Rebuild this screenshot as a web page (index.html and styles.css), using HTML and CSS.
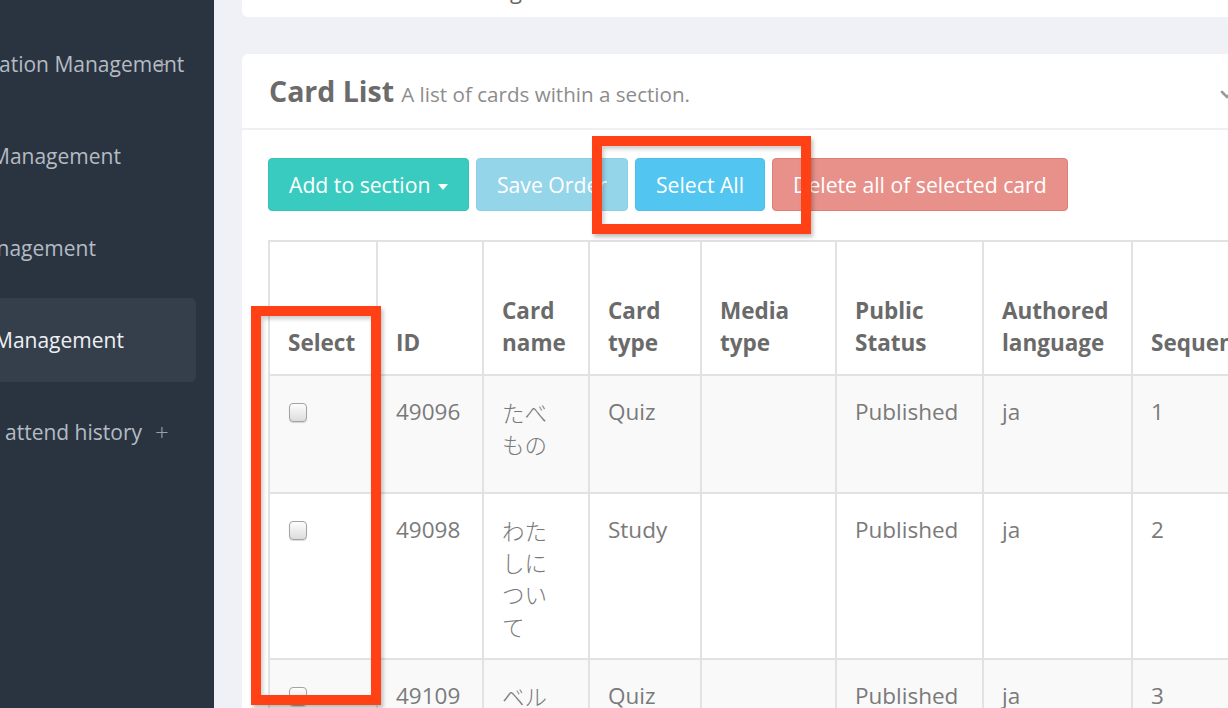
FILE: index.html
```html
<!DOCTYPE html>
<html lang="en">

<head>
    <meta charset="UTF-8">
    <title>Card List</title>
    <link rel="stylesheet" href="styles.css">
</head>

<body>
    <div class="page">
        <!-- sidebar -->
        <div class="sideNav">
            <div class="navItem">
                <span class="navText t1">ation Management</span>
                <span class="navPlus">+</span>
            </div>
            <div class="navItem">
                <span class="navText t2">Management</span>
            </div>
            <div class="navItem">
                <span class="navText t3">Management</span>
            </div>
            <div class="navItem active">
                <span class="navText t4">Management</span>
            </div>
            <div class="navItem">
                <span class="navText t5">attend history</span>
                <span class="navPlus">+</span>
            </div>
        </div>

        <!-- main -->
        <div class="mainArea">
            <div class="topCard">
                <div class="topTitle">Section Setting</div>
            </div>

            <div class="listCard">
                <div class="listHead">
                    <div class="headTitle">
                        <span class="bigTitle">Card List</span>
                        <span class="subTitle">A list of cards within a section.</span>
                    </div>
                    <svg class="chevron" width="14" height="10" viewBox="0 0 14 10">
                        <path d="M2 2 L7 7 L12 2" fill="none" stroke="#999" stroke-width="2.6" stroke-linecap="round" />
                    </svg>
                </div>

                <div class="listBody">
                    <div class="btnRow">
                        <button class="btn btnTeal">Add to section <span class="caret"></span></button>
                        <button class="btn btnPale">Save Order</button>
                        <button class="btn btnBlue">Select All</button>
                        <button class="btn btnRed">Delete all of selected card</button>
                    </div>

                    <table class="cardTable">
                        <colgroup>
                            <col style="width:108px">
                            <col style="width:106px">
                            <col style="width:106px">
                            <col style="width:112px">
                            <col style="width:135px">
                            <col style="width:147px">
                            <col style="width:149px">
                            <col style="width:160px">
                        </colgroup>
                        <thead>
                            <tr class="headRow">
                                <th>Select</th>
                                <th>ID</th>
                                <th>Card name</th>
                                <th>Card type</th>
                                <th>Media type</th>
                                <th>Public Status</th>
                                <th>Authored language</th>
                                <th>Sequence</th>
                            </tr>
                        </thead>
                        <tbody>
                            <tr class="row1">
                                <td><span class="checkBox"></span></td>
                                <td>49096</td>
                                <td class="jp">たべもの</td>
                                <td>Quiz</td>
                                <td></td>
                                <td>Published</td>
                                <td>ja</td>
                                <td>1</td>
                            </tr>
                            <tr class="row2">
                                <td><span class="checkBox"></span></td>
                                <td>49098</td>
                                <td class="jp">わたしについて</td>
                                <td>Study</td>
                                <td></td>
                                <td>Published</td>
                                <td>ja</td>
                                <td>2</td>
                            </tr>
                            <tr class="row3">
                                <td><span class="checkBox"></span></td>
                                <td>49109</td>
                                <td class="jp">ベル</td>
                                <td>Quiz</td>
                                <td></td>
                                <td>Published</td>
                                <td>ja</td>
                                <td>3</td>
                            </tr>
                        </tbody>
                    </table>
                </div>
            </div>
        </div>

        <!-- annotation boxes -->
        <div class="markBox markTop"></div>
        <div class="markBox markLeft"></div>
    </div>
</body>

</html>
```

FILE: styles.css
```css
* {
    margin: 0;
    padding: 0;
    box-sizing: border-box;
}

body {
    font-family: "Open Sans", "Noto Sans CJK JP", sans-serif;
    background: #f0f1f6;
    overflow: hidden;
}

.page {
    display: flex;
    width: 1228px;
    height: 708px;
    position: relative;
    overflow: hidden;
}

/* sidebar */
.sideNav {
    width: 214px;
    flex-shrink: 0;
    background: #2a3441;
    padding-top: 22px;
    display: flex;
    flex-direction: column;
    gap: 8px;
    overflow: hidden;
}

.navItem {
    width: 196px;
    height: 84px;
    display: flex;
    align-items: center;
    position: relative;
    color: #b5bbc3;
    font-size: 21px;
    white-space: nowrap;
    border-radius: 0 6px 6px 0;
}

.navItem.active {
    background: #353f4c;
    color: #eef0f3;
}

.navText.t1 { margin-left: -1px; }
.navText.t2 { margin-left: -9px; }
.navText.t3 { margin-left: -34px; }
.navText.t4 { margin-left: -6px; }
.navText.t5 { margin-left: 5px; }

.navPlus {
    position: absolute;
    left: 155px;
    top: 50%;
    transform: translateY(-52%);
    font-size: 24px;
    font-weight: 300;
    color: #9aa1aa;
}

/* main */
.mainArea {
    flex: 1;
    padding-left: 28px;
    overflow: hidden;
}

.topCard {
    width: 1010px;
    height: 60px;
    margin-top: -43px;
    background: #fff;
    border-radius: 6px;
    padding: 18px 0 0 128px;
}

.topTitle {
    font-size: 22px;
    line-height: 30px;
    color: #666;
}

.listCard {
    width: 1010px;
    margin-top: 37px;
    background: #fff;
    border-radius: 6px 6px 0 0;
    overflow: hidden;
}

.listHead {
    height: 76px;
    border-bottom: 2px solid #eef0f3;
    display: flex;
    align-items: center;
    justify-content: space-between;
    padding: 0 18px 0 27px;
}

.bigTitle {
    font-size: 28.5px;
    font-weight: 700;
    color: #6b6b6b;
}

.subTitle {
    font-size: 20.6px;
    color: #8c8c8c;
    margin-left: 3px;
}

.chevron {
    margin-top: 8px;
}

.listBody {
    padding: 28px 0 0 26px;
}

.btnRow {
    display: flex;
    gap: 7px;
    margin-bottom: 29px;
}

.btn {
    height: 53px;
    padding: 0 20px;
    border: 1px solid transparent;
    border-radius: 4px;
    font-family: "Open Sans", sans-serif;
    font-size: 21.2px;
    color: #fff;
}

.btnTeal {
    background: #3acbc0;
    border-color: #35c2b7;
}

.btnPale {
    background: #95d5ea;
    border-color: #8ccfe5;
}

.btnBlue {
    background: #52c6f1;
    border-color: #4bbfea;
}

.btnRed {
    background: #e8918b;
    border-color: #e07d77;
}

.caret {
    display: inline-block;
    width: 0;
    height: 0;
    margin-left: 2px;
    vertical-align: middle;
    border-top: 6px solid #fff;
    border-left: 5px solid transparent;
    border-right: 5px solid transparent;
}

/* table */
.cardTable {
    table-layout: fixed;
    border-collapse: collapse;
    width: 1023px;
    font-size: 22.5px;
    line-height: 32px;
    color: #7a7a7a;
}

.cardTable th,
.cardTable td {
    border: 2px solid #e2e2e2;
    padding: 20px 12px 0 18px;
    text-align: left;
    vertical-align: top;
}

.cardTable th {
    vertical-align: bottom;
    padding-bottom: 15px;
    font-weight: 700;
    color: #6a6a6a;
    background: #fff;
}

.cardTable .jp {
    font-family: "Noto Sans CJK JP", sans-serif;
    font-weight: 300;
    padding-right: 22px;
}

.headRow { height: 134px; }
.row1 { height: 118px; background: #f9f9f9; }
.row2 { height: 166px; background: #fff; }
.row3 { height: 80px; background: #f9f9f9; }

.checkBox {
    display: inline-block;
    width: 18px;
    height: 19px;
    margin-top: 7px;
    margin-left: 1px;
    border: 1px solid #a3a3a3;
    border-radius: 4px;
    background: linear-gradient(#fdfdfd, #dcdcdc);
    box-shadow: 0 1px 1px rgba(0, 0, 0, 0.15);
    vertical-align: top;
}

/* red annotation boxes */
.markBox {
    position: absolute;
    border: 10px solid #ff4115;
    box-shadow: 2px 3px 4px rgba(0, 0, 0, 0.25), inset 2px 3px 4px rgba(0, 0, 0, 0.2);
}

.markTop {
    left: 592px;
    top: 136px;
    width: 219px;
    height: 98px;
}

.markLeft {
    left: 251px;
    top: 306px;
    width: 130px;
    height: 399px;
}
```
